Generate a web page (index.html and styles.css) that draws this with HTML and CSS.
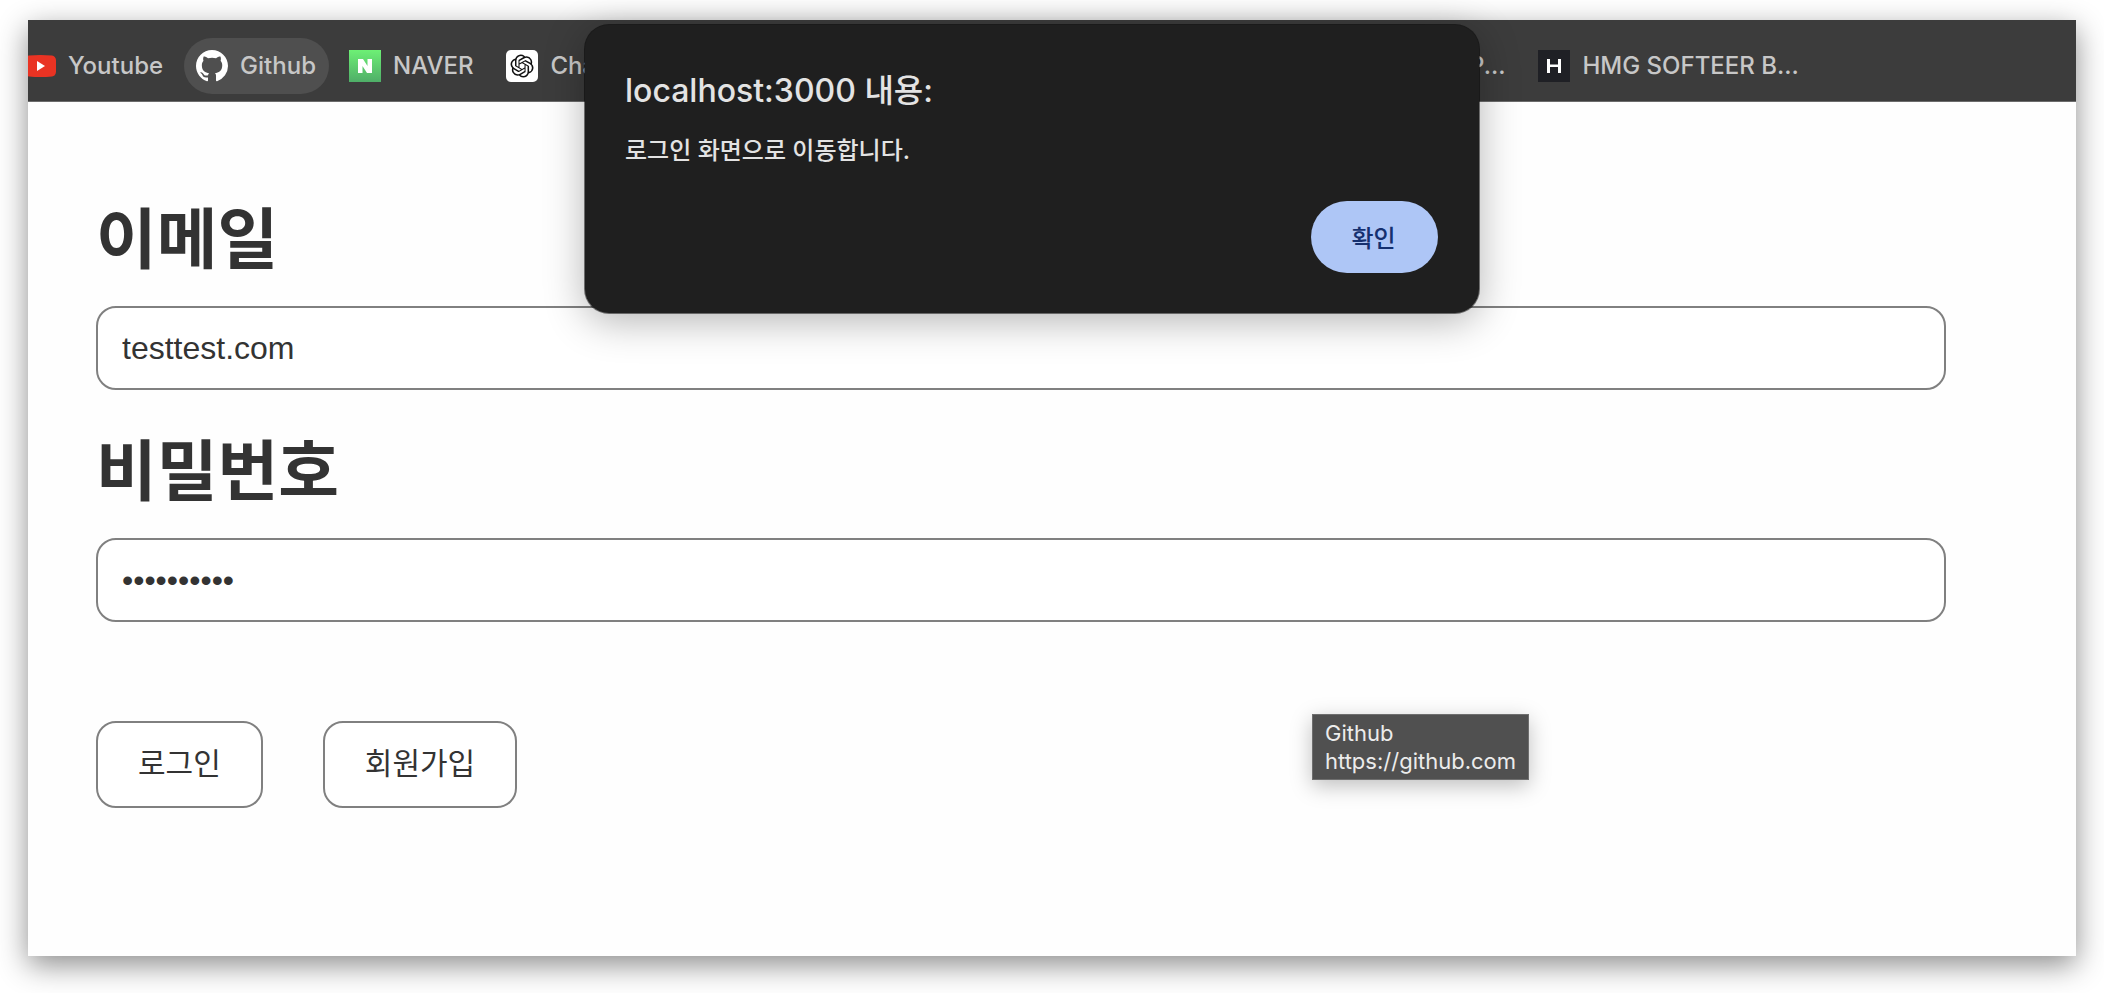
FILE: index.html
```html
<!DOCTYPE html>
<html lang="ko">
<head>
<meta charset="utf-8">
<title>로그인</title>
<link rel="stylesheet" href="styles.css">
</head>
<body>
<div class="window">
  <nav class="bookmarks" aria-label="북마크">
    <a class="bookmark" href="#">
      <svg class="icon" viewBox="0 0 32 32" aria-hidden="true"><path fill="#e93323" d="M5 5.500Q16 4.500 28 5.500Q31.500 6 32 10V22Q31.500 26 28 26.500Q16 27.500 5 26.500Q.5 26 0 22V10Q.5 6 5 5.500Z"/><path fill="#fff" d="M13 11v10l8-5z"/></svg>
      <span>Youtube</span>
    </a>
    <a class="bookmark bookmark-hover" href="#">
      <svg class="icon" viewBox="0 0 16 16" aria-hidden="true"><path fill="#fff" d="M8 0C3.580 0 0 3.580 0 8c0 3.540 2.290 6.530 5.470 7.590.4.070.55-.17.55-.38 0-.19-.01-.82-.01-1.490-2.010.37-2.530-.49-2.690-.94-.09-.23-.48-.94-.82-1.130-.28-.15-.68-.52-.01-.53.63-.01 1.080.58 1.230.82.72 1.210 1.870.87 2.330.66.07-.52.28-.87.51-1.070-1.780-.2-3.640-.89-3.640-3.950 0-.87.31-1.590.82-2.150-.08-.2-.36-1.020.08-2.120 0 0 .67-.21 2.200.82.64-.18 1.320-.27 2-.27s1.360.09 2 .27c1.530-1.040 2.200-.82 2.200-.82.44 1.100.16 1.920.08 2.120.51.56.82 1.270.82 2.150 0 3.070-1.870 3.750-3.650 3.950.29.25.54.73.54 1.480 0 1.070-.01 1.930-.01 2.200 0 .21.15.46.55.38A8.010 8.010 0 0 0 16 8c0-4.420-3.580-8-8-8z"/></svg>
      <span>Github</span>
    </a>
    <a class="bookmark" href="#">
      <svg class="icon" viewBox="0 0 32 32" aria-hidden="true"><defs><linearGradient id="green" x2="0" y2="1"><stop stop-color="#6df075"/><stop offset="1" stop-color="#4fae68"/></linearGradient></defs><path fill="url(#green)" d="M0 0h32v32H0z"/><path fill="#fff" d="M9 9h5l4.500 7V9H23v14h-5l-4.500-7v7H9z"/></svg>
      <span>NAVER</span>
    </a>
    <div class="bookmark-group">
      <a class="bookmark" href="#">
        <svg class="icon" viewBox="0 0 32 32" aria-hidden="true"><rect width="32" height="32" rx="5" fill="#fff"/><path transform="translate(4.500 4.500) scale(.96)" fill="#111" d="M22.282 9.821a5.985 5.985 0 0 0-.516-4.910 6.046 6.046 0 0 0-6.510-2.900A6.065 6.065 0 0 0 4.981 4.182a5.985 5.985 0 0 0-3.998 2.900 6.046 6.046 0 0 0 .743 7.097 5.980 5.980 0 0 0 .511 4.911 6.051 6.051 0 0 0 6.515 2.900A5.985 5.985 0 0 0 13.260 24a6.056 6.056 0 0 0 5.772-4.206 5.990 5.990 0 0 0 3.998-2.900 6.056 6.056 0 0 0-.748-7.073zM13.260 22.430a4.476 4.476 0 0 1-2.876-1.041l.141-.080 4.779-2.758a.795.795 0 0 0 .393-.681v-6.737l2.020 1.169a.071.071 0 0 1 .038.052v5.583a4.504 4.504 0 0 1-4.495 4.493zM3.600 18.304a4.470 4.470 0 0 1-.535-3.014l.142.085 4.783 2.759a.771.771 0 0 0 .781 0l5.843-3.369v2.332a.080.080 0 0 1-.033.062L9.740 19.950a4.499 4.499 0 0 1-6.140-1.646zM2.341 7.896a4.485 4.485 0 0 1 2.365-1.973V11.600a.766.766 0 0 0 .388.677l5.815 3.354-2.020 1.169a.076.076 0 0 1-.071 0l-4.830-2.787A4.504 4.504 0 0 1 2.341 7.872zm16.596 3.856l-5.833-3.388L15.119 7.200a.076.076 0 0 1 .071 0l4.830 2.791a4.494 4.494 0 0 1-.676 8.104v-5.677a.790.790 0 0 0-.407-.667zm2.011-3.024l-.142-.085-4.774-2.782a.776.776 0 0 0-.785 0L9.409 9.230V6.897a.066.066 0 0 1 .028-.061l4.830-2.787a4.499 4.499 0 0 1 6.681 4.660zM8.307 12.863l-2.020-1.164a.080.080 0 0 1-.038-.057V6.074a4.499 4.499 0 0 1 7.376-3.453l-.142.080L8.704 5.459a.795.795 0 0 0-.393.682zm1.097-2.366l2.602-1.500 2.607 1.500v3l-2.597 1.500-2.607-1.500z"/></svg>
        <span>ChatGPT</span>
      </a>
      <a class="bookmark" href="#"><span>P...</span></a>
    </div>
    <a class="bookmark" href="#">
      <svg class="icon" viewBox="0 0 32 32" aria-hidden="true"><path fill="#1f2025" d="M0 0h32v32H0z"/><path fill="#fff" d="M9 9h3v5.500h8V9h3v14h-3v-6h-8v6H9z"/></svg>
      <span>HMG SOFTEER B...</span>
    </a>
  </nav>

  <form class="login">
    <div class="field">
      <label for="email">이메일</label>
      <input id="email" type="text" value="testtest.com">
    </div>
    <div class="field">
      <label for="password">비밀번호</label>
      <input id="password" type="password" value="0123456789">
    </div>
    <div class="actions">
      <button class="action" type="button">로그인</button>
      <button class="action" type="button">회원가입</button>
    </div>
  </form>

  <div class="dialog" role="alertdialog" aria-labelledby="dialog-title" aria-describedby="dialog-text">
    <h1 class="dialog-title" id="dialog-title">localhost:3000 내용:</h1>
    <p class="dialog-text" id="dialog-text">로그인 화면으로 이동합니다.</p>
    <button class="confirm" type="button">확인</button>
  </div>

  <div class="tooltip" role="tooltip">Github<br>https://github.com</div>
</div>
</body>
</html>
```
FILE: styles.css
```css
* {
  box-sizing: border-box;
}

body {
  margin: 0;
  min-height: 100vh;
  padding: 20px 28px 37px;
  display: flex;
  background: #fff;
  color: #333;
  font-family: Inter, "Noto Sans CJK KR", sans-serif;
}

.window {
  position: relative;
  flex: 1;
  min-width: 0;
  background: #fefefe;
  box-shadow: 0 9px 28px rgba(0, 0, 0, 0.45);
}

.bookmarks {
  display: flex;
  align-items: center;
  gap: 8px;
  height: 82px;
  padding-top: 10px;
  overflow: hidden;
  background: #3c3c3c;
  border-bottom: 1px solid #6c6c6c;
}

.bookmark {
  display: flex;
  flex: none;
  align-items: center;
  gap: 12px;
  height: 56px;
  padding: 0 13px 0 12px;
  border-radius: 28px;
  color: #c7c7c7;
  font-size: 24px;
  font-weight: 500;
  line-height: 32px;
  text-decoration: none;
  white-space: nowrap;
}

.bookmarks > .bookmark:first-child {
  margin-left: -16px;
}

.bookmark-hover {
  background: #4f4f4f;
}

.bookmark-group {
  display: flex;
  flex: none;
  justify-content: space-between;
  width: 1024px;
}

.icon {
  flex: none;
  width: 32px;
  height: 32px;
}

.login {
  display: flex;
  flex-direction: column;
  gap: 32px;
  padding: 88px 130px 40px 68px;
}

.field {
  display: flex;
  flex-direction: column;
  gap: 18px;
}

.field label {
  font-size: 66px;
  font-weight: 700;
  line-height: 98px;
}

.field input {
  width: 100%;
  height: 84px;
  padding: 0 24px;
  border: 2px solid #808080;
  border-radius: 20px;
  background: #fff;
  color: #333;
  font-family: "Liberation Sans", Arial, sans-serif;
  font-size: 32px;
}

.actions {
  display: flex;
  gap: 60px;
  padding-top: 67px;
}

.action {
  height: 87px;
  padding: 0 40px 8px;
  border: 2px solid #808080;
  border-radius: 20px;
  background: #fff;
  color: #333;
  font-family: "Noto Sans CJK KR", sans-serif;
  font-size: 30px;
}

.dialog {
  position: absolute;
  top: 5px;
  left: 557px;
  display: flex;
  flex-direction: column;
  width: 894px;
  padding: 44px 41px 40px 40px;
  border-radius: 24px;
  background: #1f1f1f;
  color: #e3e3e3;
  box-shadow: 0 0 0 1px rgba(0, 0, 0, 0.5), 0 8px 40px rgba(0, 0, 0, 0.3);
}

.dialog-title {
  margin: 0 0 20px;
  font-size: 32px;
  font-weight: 500;
  line-height: 44px;
}

.dialog-text {
  margin: 0 0 32px;
  font-size: 24px;
  font-weight: 500;
  line-height: 36px;
}

.confirm {
  align-self: flex-end;
  width: 127px;
  height: 72px;
  padding: 0 2px 2px 0;
  border: 0;
  border-radius: 36px;
  background: #aec6f6;
  color: #15306f;
  font-family: "Noto Sans CJK KR", sans-serif;
  font-size: 24px;
  font-weight: 500;
}

.tooltip {
  position: absolute;
  top: 694px;
  left: 1284px;
  padding: 4px 12px;
  border: 1px solid #6e6e6e;
  background: #505050;
  color: #ececec;
  font-size: 22px;
  line-height: 28px;
  box-shadow: 0 6px 20px rgba(0, 0, 0, 0.25);
}
```
